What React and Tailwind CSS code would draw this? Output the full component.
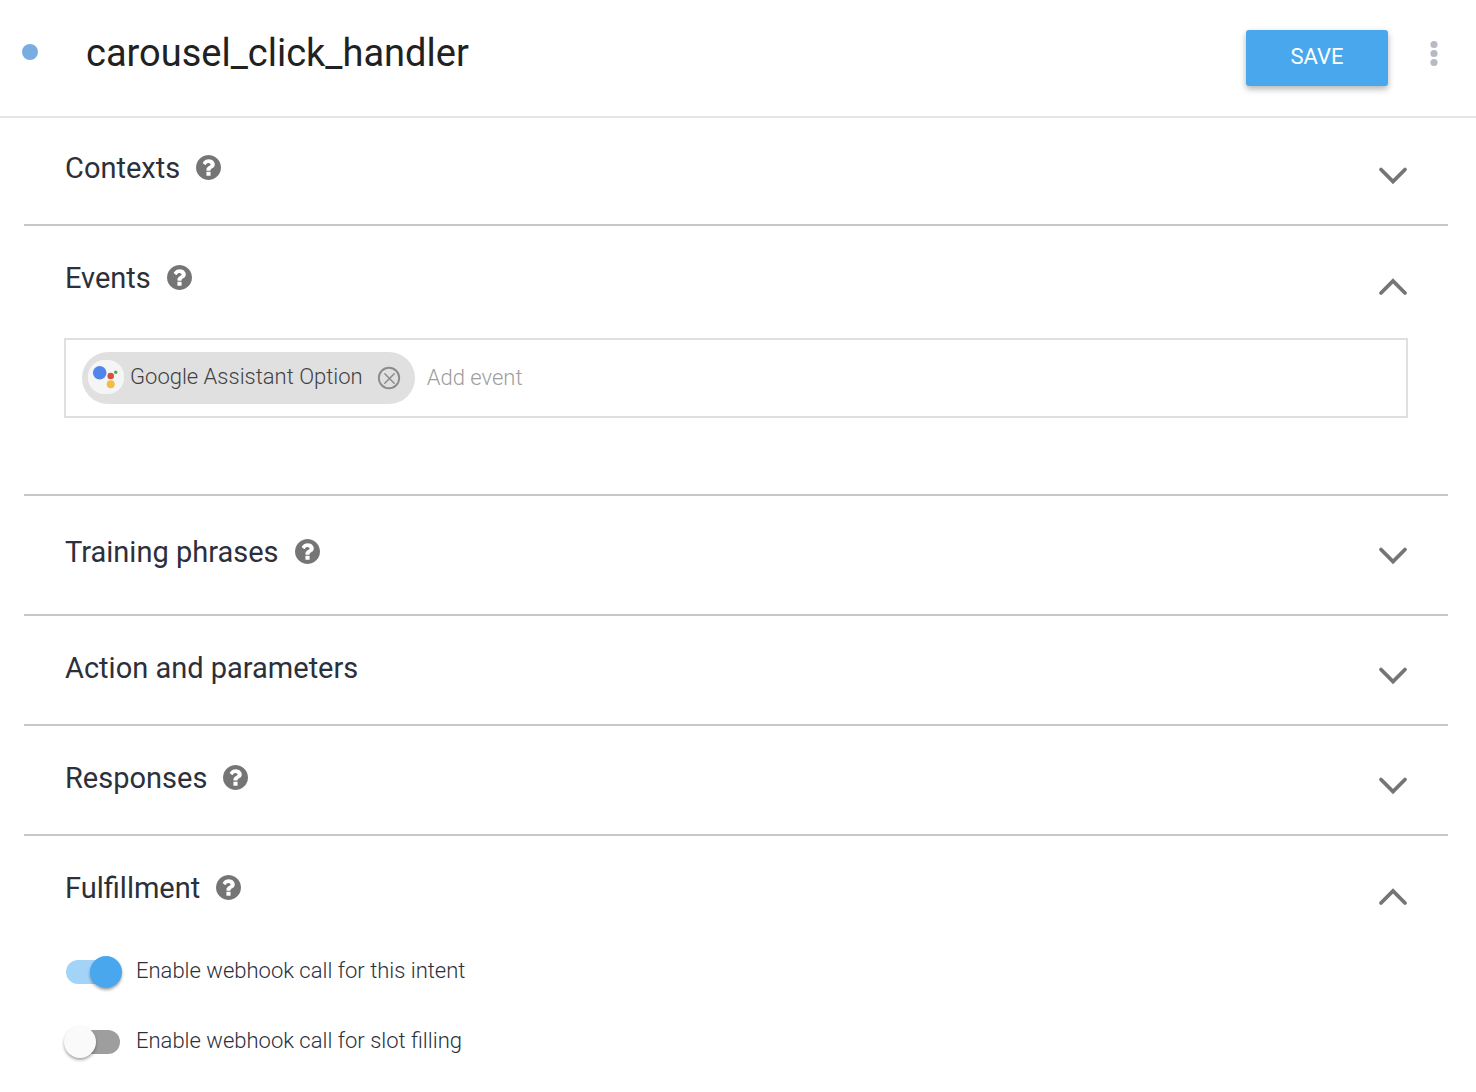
import React, { useState } from "react";
import clsx from "clsx";

const HelpIcon = () => (
  <svg viewBox="128 128 1536 1536" className="size-[25px]" fill="#757575">
    <path d="M1024 1376v-192q0-14-9-23t-23-9h-192q-14 0-23 9t-9 23v192q0 14 9 23t23 9h192q14 0 23-9t9-23zm256-672q0-88-55.5-163t-138.5-116-170-41q-243 0-371 213-15 24 8 42l132 100q7 6 19 6 16 0 25-12 53-68 86-92 34-24 86-24 48 0 85.5 26t37.5 59q0 38-20 61t-68 45q-63 28-115.5 86.5t-52.5 125.5v36q0 14 9 23t23 9h192q14 0 23-9t9-23q0-19 21.5-49.5t54.5-49.5q32-18 49-28.5t46-35 44.5-48 28-60.5 12.5-81zm384 192q0 209-103 385.5t-279.5 279.5-385.5 103-385.5-103-279.5-279.5-103-385.5 103-385.5 279.5-279.5 385.5-103 385.5 103 279.5 279.5 103 385.5z" />
  </svg>
);

const Chevron = ({ open }) => (
  <svg
    viewBox="0 0 30 36"
    className="h-9 w-[30px]"
    fill="none"
    stroke="#757575"
    strokeWidth="3.8"
    strokeLinecap="round"
  >
    <path d={open ? "M3 25L15 13L27 25" : "M3 11.5L15 23.5L27 11.5"} />
  </svg>
);

const AssistantIcon = () => (
  <svg viewBox="0 0 36 34" className="h-[34px] w-9 shrink-0">
    <rect width="36" height="34" rx="16" fill="#f5f5f5" />
    <circle cx="11.7" cy="12.7" r="6.8" fill="#4f86ec" />
    <circle cx="22.7" cy="16" r="3.3" fill="#d94f3f" />
    <circle cx="27.7" cy="12.3" r="1.7" fill="#58a55c" />
    <circle cx="22.7" cy="24.3" r="4" fill="#f2bd42" />
  </svg>
);

const RemoveIcon = () => (
  <svg
    viewBox="0 0 24 24"
    className="size-6"
    fill="none"
    stroke="#8c8c8c"
    strokeLinecap="round"
  >
    <circle cx="12" cy="12" r="10.2" strokeWidth="1.9" />
    <path d="M7.8 7.8L17.2 17.2M17.2 7.8L7.8 17.2" strokeWidth="1.5" />
  </svg>
);

const Section = ({
  title,
  help = true,
  defaultOpen = false,
  className = "pt-[34px] pb-[30px]",
  toggleClassName = "mt-2",
  last = false,
  children,
}) => {
  const [open, setOpen] = useState(defaultOpen);

  return (
    <section
      className={clsx(
        "mr-7 ml-6 px-10",
        !last && "border-b-2 border-[#c9c6c9]",
        className
      )}
    >
      <div className="flex items-start justify-between">
        <div className="flex h-9 items-center gap-4 pl-px">
          <h2 className="text-[29px] leading-9 text-[#2b303b]">{title}</h2>
          {help && (
            <button
              type="button"
              aria-label={`Help: ${title}`}
              className="pb-px"
            >
              <HelpIcon />
            </button>
          )}
        </div>
        <button
          type="button"
          aria-label={`Toggle ${title}`}
          aria-expanded={open}
          onClick={() => setOpen(!open)}
          className={toggleClassName}
        >
          <Chevron open={open} />
        </button>
      </div>
      {open && children}
    </section>
  );
};

const Switch = ({ id, label, defaultChecked }) => (
  <div className="flex h-9 items-center gap-4 pl-0.5">
    <input
      id={id}
      type="checkbox"
      role="switch"
      defaultChecked={defaultChecked}
      className="flex h-6 w-[54px] shrink-0 appearance-none items-center rounded-full bg-[#9e9e9e] before:-ml-0.5 before:size-8 before:shrink-0 before:rounded-full before:bg-[#fafafa] before:shadow-[0_2px_3px_rgba(0,0,0,0.35)] checked:bg-[#a3d3f7] checked:before:ml-6 checked:before:bg-[#48a7ed]"
    />
    <label
      htmlFor={id}
      className="pb-0.5 text-[22px] leading-8 font-light text-[#2b303b]"
    >
      {label}
    </label>
  </div>
);

const App = () => {
  const [name, setName] = useState("carousel_click_handler");
  const [events, setEvents] = useState(["Google Assistant Option"]);

  return (
    <div className="min-h-screen bg-white font-['Roboto',sans-serif]">
      {/* Intent name and actions */}
      <header className="flex items-start border-b-2 border-[#e5e5e5] pt-[30px] pr-8 pb-[30px] pl-[22px]">
        <span className="mt-3.5 size-4 shrink-0 rounded-full bg-[#78ade2]" />
        <input
          type="text"
          aria-label="Intent name"
          value={name}
          onChange={(e) => setName(e.target.value)}
          className="ml-12 h-[46px] min-w-0 flex-1 text-[38px] leading-[46px] text-[#212121] outline-none"
        />
        <button
          type="button"
          className="h-14 w-[142px] rounded-[3px] bg-[#48a7ed] pb-1 text-[22px] text-white shadow-[0_3px_6px_rgba(0,0,0,0.3)]"
        >
          SAVE
        </button>
        <button type="button" aria-label="More options" className="ml-9">
          <svg viewBox="0 0 20 48" className="h-12 w-5" fill="#b6bac4">
            <circle cx="10" cy="14.5" r="3.6" />
            <circle cx="10" cy="23.5" r="3.6" />
            <circle cx="10" cy="32.5" r="3.6" />
          </svg>
        </button>
      </header>

      <main>
        <Section title="Contexts" className="pt-8 pb-[30px]" />

        <Section title="Events" defaultOpen className="pt-[34px] pb-[76px]">
          <div className="mt-[34px] flex h-20 items-center border-2 border-[#e0e0e0] px-4">
            {events.map((event) => (
              <span
                key={event}
                className="mr-3 flex h-[52px] items-center rounded-full bg-[#e0e0e0] pr-3.5 pl-1.5"
              >
                <span className="pb-0.5">
                  <AssistantIcon />
                </span>
                <span className="ml-1.5 pb-0.5 text-[22px] leading-8 font-light text-[#424242]">
                  {event}
                </span>
                <button
                  type="button"
                  aria-label={`Remove ${event}`}
                  onClick={() => setEvents(events.filter((e) => e !== event))}
                  className="ml-3.5"
                >
                  <RemoveIcon />
                </button>
              </span>
            ))}
            <input
              type="text"
              aria-label="Add event"
              placeholder="Add event"
              className="h-8 min-w-0 flex-1 pb-0.5 text-[22px] font-light text-[#424242] outline-none placeholder:text-[#9e9e9e]"
            />
          </div>
        </Section>

        <Section
          title="Training phrases"
          className="pt-[38px] pb-10"
          toggleClassName="mt-1"
        />
        <Section title="Action and parameters" help={false} />
        <Section title="Responses" />

        <Section title="Fulfillment" defaultOpen last className="pt-[34px]">
          <div className="mt-10 flex flex-col gap-[34px]">
            <Switch
              id="webhook-intent"
              label="Enable webhook call for this intent"
              defaultChecked
            />
            <Switch
              id="webhook-slot"
              label="Enable webhook call for slot filling"
            />
          </div>
        </Section>
      </main>
    </div>
  );
};

export default App;
